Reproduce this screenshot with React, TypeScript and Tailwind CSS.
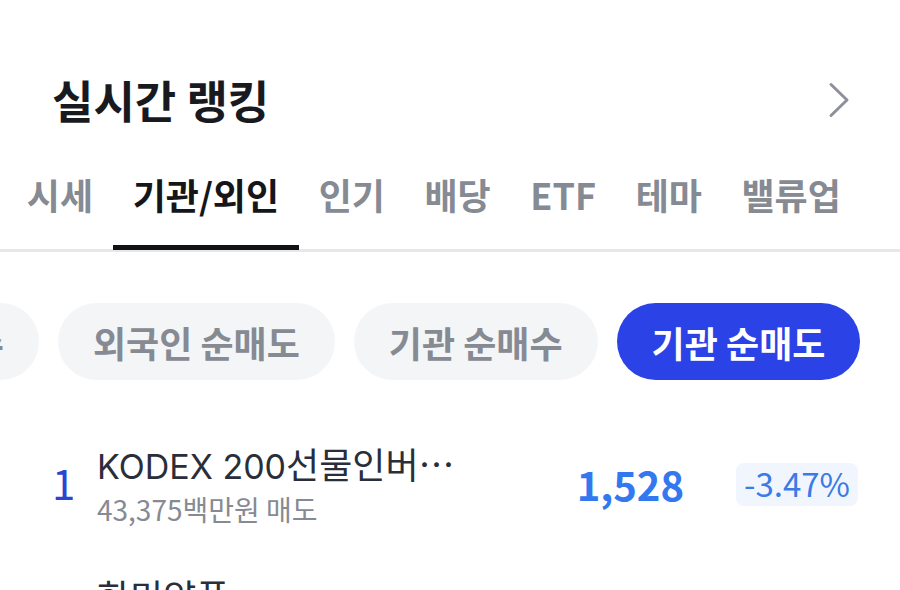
const tabs = ["시세", "기관/외인", "인기", "배당", "ETF", "테마", "밸류업"];
const chips = ["외국인 순매수", "외국인 순매도", "기관 순매수", "기관 순매도"];

const rows = [
    { rank: 1, latin: "KODEX 200", name: "선물인버스2X", sub: "43,375백만원 매도", price: "1,528", rate: "-3.47%" },
    { rank: 2, latin: "", name: "한미약품", sub: "20,112백만원 매도", price: "312,500", rate: "-1.26%" },
];

export default function App() {
    return (
        <div
            className="w-[900px] h-[590px] overflow-hidden bg-white"
            style={{ fontFamily: '"Noto Sans CJK KR", "Noto Sans", sans-serif' }}
        >
            {/* Header */}
            <div className="flex items-center justify-between pl-[52px] pr-[50px] pt-[77px]">
                <h1 className="text-[45px] leading-[45px] font-bold text-[#191a1f]">실시간 랭킹</h1>
                <svg width="22" height="36" viewBox="0 0 22 36" fill="none">
                    <path d="M3 2.5 L19 18 L3 33.5" stroke="#8e9199" strokeWidth="3" strokeLinecap="round" strokeLinejoin="round" />
                </svg>
            </div>

            {/* Tabs */}
            <div className="border-b-[3px] border-[#e6e7ea] mt-[50px]">
                <div className="flex pl-[7px]">
                    {tabs.map((t, i) => (
                        <div
                            key={t}
                            className={`relative px-[19.8px] pb-[33px] text-[36px] leading-[44px] font-bold ${
                                i === 1 ? "text-[#15161a]" : "text-[#858a93]"
                            }`}
                        >
                            {t}
                            {i === 1 && <div className="absolute left-0 right-0 -bottom-[1px] h-[5px] bg-[#111214]" />}
                        </div>
                    ))}
                </div>
            </div>

            {/* Chips */}
            <div className="overflow-hidden mt-[51px]">
                <div className="flex gap-[19px] -ml-[238px]">
                    {chips.map((c, i) => (
                        <div
                            key={c}
                            className={`shrink-0 h-[77px] px-[35px] rounded-full flex items-center text-[36px] font-bold ${
                                i === 3 ? "bg-[#2b42e6] text-white" : "bg-[#f4f5f7] text-[#868a93]"
                            }`}
                        >
                            {c}
                        </div>
                    ))}
                </div>
            </div>

            {/* Ranking rows */}
            <div className="mt-[60px] pl-[52px] pr-[42px] flex flex-col gap-[44px]">
                {rows.map((r) => (
                    <div key={r.rank} className="flex items-center">
                        <div className="w-[45px] text-[42px] leading-none text-[#2a44d4] pb-[4px]">{r.rank}</div>
                        <div className="flex-1 min-w-0">
                            <div className="text-[36px] leading-[46px] text-[#2a2e3b] truncate w-[365px]">
                                {r.latin && (
                                    <span className="text-[34px]" style={{ fontFamily: "Inter, sans-serif" }}>
                                        {r.latin}
                                    </span>
                                )}
                                {r.name}
                            </div>
                            <div className="text-[28px] leading-[38px] text-[#858a93]">{r.sub}</div>
                        </div>
                        <div className="text-[40px] font-bold text-[#3478ef] mr-[52px]">{r.price}</div>
                        <div className="bg-[#f1f6fe] rounded-[8px] px-[8px] h-[43px] flex items-center text-[33px] text-[#3a7be6]">
                            {r.rate}
                        </div>
                    </div>
                ))}
            </div>
        </div>
    );
}
